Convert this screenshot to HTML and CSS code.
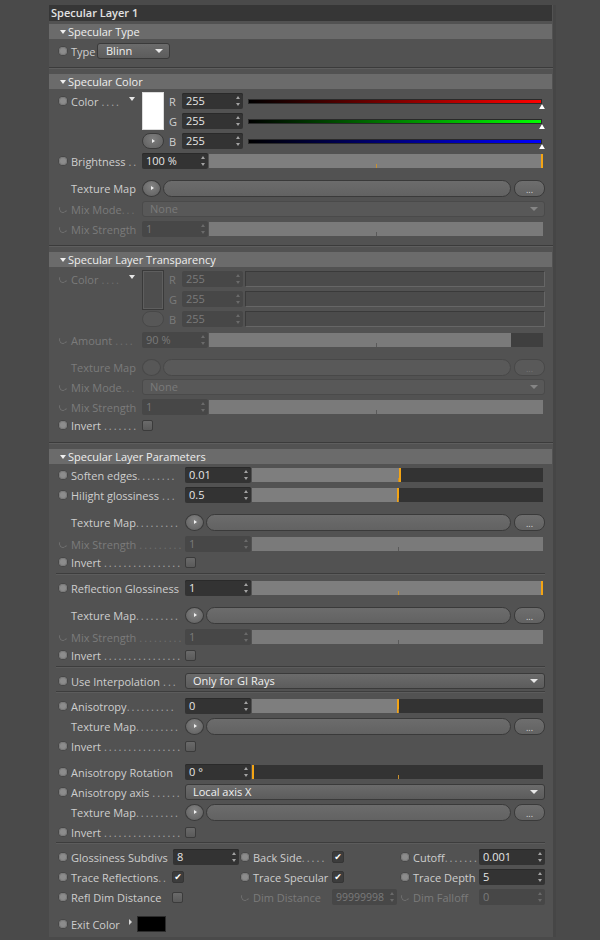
FILE: index.html
```html
<!DOCTYPE html>
<html>
<head>
<meta charset="utf-8">
<link rel="stylesheet" href="styles.css">
</head>
<body>
<div class="panel">
  <div class="title">Specular Layer 1</div>

  <section class="grp">
    <div class="ghead first">Specular Type</div>
    <div class="gbody">
      <div class="row"><i class="rd"></i><span class="lbl w-type">Type</span><div class="dd blinn">Blinn</div></div>
    </div>
  </section>
  <div class="sep"></div>

  <section class="grp">
    <div class="ghead">Specular Color</div>
    <div class="gbody">
      <div class="cblock">
        <div class="chead"><i class="rd"></i><span class="lbl w-color"><span class="t">Color</span><span class="d sp">....</span></span><i class="ctri"></i></div>
        <div class="swcol"><div class="swatch white"></div><div class="sbtn"></div></div>
        <div class="rgb">
          <div class="crow"><span class="ch">R</span><div class="num c">255</div><div class="cbar red"></div></div>
          <div class="crow"><span class="ch">G</span><div class="num c">255</div><div class="cbar green"></div></div>
          <div class="crow"><span class="ch">B</span><div class="num c">255</div><div class="cbar blue"></div></div>
        </div>
      </div>
      <div class="row"><i class="rd"></i><span class="lbl"><span class="t">Brightness</span><span class="d sp">..</span></span><div class="num">100 %</div><div class="sl hot" style="--v:100%"><i class="mk end"></i></div></div>
      <div class="row tx"><i class="rd no"></i><span class="lbl">Texture Map</span><div class="cbtn"></div><div class="pill"></div><div class="more">...</div></div>
      <div class="row m1 dis"><i class="rd off"></i><span class="lbl"><span class="t">Mix Mode</span><span class="d">...</span></span><div class="dd">None</div></div>
      <div class="row dis"><i class="rd off"></i><span class="lbl">Mix Strength</span><div class="num">1</div><div class="sl" style="--v:100%"></div></div>
    </div>
  </section>
  <div class="sep"></div>

  <section class="grp">
    <div class="ghead">Specular Layer Transparency</div>
    <div class="gbody pb9">
      <div class="cblock dis">
        <div class="chead"><i class="rd off"></i><span class="lbl w-color"><span class="t">Color</span><span class="d sp">....</span></span><i class="ctri"></i></div>
        <div class="swcol"><div class="swatch dark"></div><div class="sbtn"></div></div>
        <div class="rgb">
          <div class="crow"><span class="ch">R</span><div class="num c">255</div><div class="tbar"></div></div>
          <div class="crow"><span class="ch">G</span><div class="num c">255</div><div class="tbar"></div></div>
          <div class="crow"><span class="ch">B</span><div class="num c">255</div><div class="tbar"></div></div>
        </div>
      </div>
      <div class="row m1 dis"><i class="rd off"></i><span class="lbl"><span class="t">Amount</span><span class="d sp">....</span></span><div class="num">90 %</div><div class="sl" style="--v:90.4%"></div></div>
      <div class="row tx dis"><i class="rd no"></i><span class="lbl">Texture Map</span><div class="cbtn"></div><div class="pill"></div><div class="more">...</div></div>
      <div class="row dis"><i class="rd off"></i><span class="lbl"><span class="t">Mix Mode</span><span class="d">...</span></span><div class="dd">None</div></div>
      <div class="row dis"><i class="rd off"></i><span class="lbl">Mix Strength</span><div class="num">1</div><div class="sl" style="--v:100%"></div></div>
      <div class="row ck"><i class="rd"></i><span class="lbl"><span class="t">Invert</span><span class="d sp">.......</span></span><i class="cb"></i></div>
    </div>
  </section>
  <div class="sep"></div>

  <section class="grp">
    <div class="ghead">Specular Layer Parameters</div>
    <div class="gbody params">
      <div class="row"><i class="rd"></i><span class="lbl"><span class="t">Soften edges</span><span class="d">........</span></span><div class="num">0.01</div><div class="sl hot" style="--v:50.7%"><i class="mk"></i></div></div>
      <div class="row"><i class="rd"></i><span class="lbl"><span class="t">Hilight glossiness</span><span class="d sp">...</span></span><div class="num">0.5</div><div class="sl hot" style="--v:50.3%"><i class="mk"></i></div></div>
      <div class="row tx"><i class="rd no"></i><span class="lbl"><span class="t">Texture Map</span><span class="d">.........</span></span><div class="cbtn"></div><div class="pill"></div><div class="more">...</div></div>
      <div class="row m2 dis"><i class="rd off"></i><span class="lbl"><span class="t">Mix Strength</span><span class="d sp">.........</span></span><div class="num">1</div><div class="sl" style="--v:100%"></div></div>
      <div class="row ck"><i class="rd"></i><span class="lbl"><span class="t">Invert</span><span class="d sp">................</span></span><i class="cb"></i></div>
      <div class="psep"></div>
      <div class="row"><i class="rd"></i><span class="lbl">Reflection Glossiness</span><div class="num">1</div><div class="sl hot" style="--v:100%"><i class="mk end"></i></div></div>
      <div class="row tx"><i class="rd no"></i><span class="lbl"><span class="t">Texture Map</span><span class="d">.........</span></span><div class="cbtn"></div><div class="pill"></div><div class="more">...</div></div>
      <div class="row m2 dis"><i class="rd off"></i><span class="lbl"><span class="t">Mix Strength</span><span class="d sp">.........</span></span><div class="num">1</div><div class="sl" style="--v:100%"></div></div>
      <div class="row ck"><i class="rd"></i><span class="lbl"><span class="t">Invert</span><span class="d sp">................</span></span><i class="cb"></i></div>
      <div class="psep"></div>
      <div class="row"><i class="rd"></i><span class="lbl"><span class="t">Use Interpolation</span><span class="d sp">...</span></span><div class="dd">Only for GI Rays</div></div>
      <div class="psep s2"></div>
      <div class="row"><i class="rd"></i><span class="lbl"><span class="t">Anisotropy</span><span class="d">..........</span></span><div class="num">0</div><div class="sl hot" style="--v:50.3%"><i class="mk"></i></div></div>
      <div class="row"><i class="rd no"></i><span class="lbl"><span class="t">Texture Map</span><span class="d">.........</span></span><div class="cbtn"></div><div class="pill"></div><div class="more">...</div></div>
      <div class="row ck m2"><i class="rd"></i><span class="lbl"><span class="t">Invert</span><span class="d sp">................</span></span><i class="cb"></i></div>
      <div class="row m8"><i class="rd"></i><span class="lbl">Anisotropy Rotation</span><div class="num">0 °</div><div class="sl hot" style="--v:0%"><i class="mk start"></i></div></div>
      <div class="row"><i class="rd"></i><span class="lbl"><span class="t">Anisotropy axis</span><span class="d sp">......</span></span><div class="dd">Local axis X</div></div>
      <div class="row"><i class="rd no"></i><span class="lbl"><span class="t">Texture Map</span><span class="d">.........</span></span><div class="cbtn"></div><div class="pill"></div><div class="more">...</div></div>
      <div class="row ck m2"><i class="rd"></i><span class="lbl"><span class="t">Invert</span><span class="d sp">................</span></span><i class="cb"></i></div>
      <div class="psep s3"></div>

      <div class="g3">
        <div class="cell c1"><i class="rd"></i><span class="lbl">Glossiness Subdivs</span><div class="num f1">8</div></div>
        <div class="cell c2"><i class="rd"></i><span class="lbl"><span class="t">Back Side</span><span class="d">.....</span></span><i class="cb on">✔</i></div>
        <div class="cell c3"><i class="rd"></i><span class="lbl"><span class="t">Cutoff</span><span class="d">.......</span></span><div class="num">0.001</div></div>

        <div class="cell c1"><i class="rd"></i><span class="lbl"><span class="t">Trace Reflections</span><span class="d">..</span></span><i class="cb on">✔</i></div>
        <div class="cell c2"><i class="rd"></i><span class="lbl">Trace Specular</span><i class="cb on">✔</i></div>
        <div class="cell c3"><i class="rd"></i><span class="lbl">Trace Depth</span><div class="num">5</div></div>

        <div class="cell c1"><i class="rd"></i><span class="lbl">Refl Dim Distance</span><i class="cb"></i></div>
        <div class="cell c2 dis"><i class="rd off"></i><span class="lbl">Dim Distance</span><div class="num f2">99999998</div></div>
        <div class="cell c3 dis"><i class="rd off"></i><span class="lbl">Dim Falloff</span><div class="num">0</div></div>
      </div>

      <div class="row exit"><i class="rd"></i><span class="lbl">Exit Color</span><i class="rtri"></i><div class="exsw"></div></div>
    </div>
  </section>
</div>
</body>
</html>
```

FILE: styles.css
```css
* { box-sizing: border-box; }

body {
  margin: 0;
  background: #4a4a4a;
  font-family: "Open Sans", "Noto Sans", sans-serif;
  font-size: 11px;
  color: #cecece;
}

i { font-style: normal; }

.panel {
  margin: 5px 0 0 49px;
  width: 507px;
  background: #525252;
  border-right: 3px solid #464646;
  padding-bottom: 3px;
}

.title {
  height: 16px;
  line-height: 16px;
  background: #363636;
  color: #e2e2e2;
  font-weight: 600;
  padding-left: 2px;
  margin-right: 1px;
}

.ghead {
  height: 15px;
  line-height: 15px;
  background: #6b6b6b;
  color: #eeeeee;
  padding-left: 11px;
  margin-right: 1px;
  display: flex;
  align-items: center;
}
.ghead.first { margin-top: 3px; }
.ghead::before {
  content: "";
  border-left: 3.5px solid transparent;
  border-right: 3.5px solid transparent;
  border-top: 4px solid #f0f0f0;
  margin-right: 2px;
}

.gbody { padding: 2px 0 6px; --lw: 71px; }
.gbody.pb9 { padding-bottom: 9px; }
.gbody.params { padding: 1px 0 0; --lw: 114px; }

.sep {
  height: 2px;
  border-top: 1px solid #3b3b3b;
  border-bottom: 1px solid #5e5e5e;
  margin-bottom: 5px;
}

.psep {
  height: 2px;
  margin: 3px 8px 3px 7px;
  border-top: 1px solid #3d3d3d;
  border-bottom: 1px solid #5c5c5c;
}
.psep.s2 { margin-top: 0; }
.psep.s3 { margin-top: 2px; }

/* rows */
.row {
  display: flex;
  align-items: center;
  height: 20px;
  padding: 0 8px 0 10px;
}
.row.tx { margin-top: 7px; }
.row.m1 { margin-top: 1px; }
.row.m2 { margin-top: 2px; }
.row.m8 { margin-top: 8px; }
.row.ck { height: 16px; }
.row.exit { margin-top: 7px; }

/* radio */
.rd {
  flex: none;
  width: 8px;
  height: 8px;
  border-radius: 50%;
  background: #8c8c8c;
  box-shadow: inset 0 0 0 1px #7a7a7a, 0 0 0 1px #474747;
  margin-right: 4px;
}
.rd.off {
  background: none;
  box-shadow: none;
  border: 1.5px solid transparent;
  border-left-color: #6e6e6e;
  border-bottom-color: #6e6e6e;
  transform: rotate(-20deg);
}
.rd.no { visibility: hidden; }

/* labels */
.lbl {
  flex: none;
  width: var(--lw);
  display: flex;
  white-space: nowrap;
}
.lbl .t { flex: none; }
.lbl .d {
  flex: none;
  letter-spacing: 2px;
  color: #a6a6a6;
}
.lbl .d.sp { padding-left: 3px; }
.lbl.w-type { width: 26px; }
.lbl.w-color { width: 58px; }

.dis .lbl { color: #7b7b7b; }
.dis .lbl .d { color: #6e6e6e; }

/* number field */
.num {
  flex: none;
  position: relative;
  width: 66px;
  height: 16px;
  line-height: 16px;
  padding-left: 4px;
  background: #333333;
  border-radius: 2px;
  color: #e6e6e6;
  box-shadow: inset 0 1px 0 #2a2a2a;
  overflow: hidden;
  white-space: nowrap;
}
.num::before,
.num::after {
  content: "";
  position: absolute;
  right: 3px;
  border-left: 2.5px solid transparent;
  border-right: 2.5px solid transparent;
}
.num::before { top: 3px; border-bottom: 3px solid #a3a3a3; }
.num::after { bottom: 3px; border-top: 3px solid #a3a3a3; }
.num.c { width: 61px; }
.num.f1 { margin-left: 1px; }
.num.f2 { width: 65px; font-size: 10.5px; }

.dis .num { background: #474747; color: #7a7a7a; box-shadow: none; }
.dis .num::before { border-bottom-color: #6a6a6a; }
.dis .num::after { border-top-color: #6a6a6a; }

/* slider */
.sl {
  flex: 1;
  position: relative;
  height: 14px;
  margin: 0 2px 0 1px;
  background: linear-gradient(to right, #7e7e7e var(--v), #333333 var(--v));
}
.sl::after {
  content: "";
  position: absolute;
  left: 50%;
  bottom: 0;
  width: 1px;
  height: 4px;
  background: #5a5a5a;
}
.sl.hot::after { background: #c8902e; }
.dis .sl { background: linear-gradient(to right, #7a7a7a var(--v), #3f3f3f var(--v)); }
.mk {
  position: absolute;
  top: 0;
  bottom: 0;
  left: var(--v);
  width: 2px;
  margin-left: -1px;
  background: #f3a414;
}
.mk.end { margin-left: -2px; }
.mk.start { margin-left: 0; }

/* dropdown */
.dd {
  flex: 1;
  position: relative;
  height: 16px;
  line-height: 14px;
  border: 1px solid #3a3a3a;
  border-radius: 3px;
  background: linear-gradient(#6b6b6b, #5c5c5c);
  color: #f0f0f0;
  padding-left: 7px;
}
.dd::after {
  content: "";
  position: absolute;
  right: 6px;
  top: 5px;
  border-left: 4px solid transparent;
  border-right: 4px solid transparent;
  border-top: 4px solid #e8e8e8;
}
.dd.blinn { flex: none; width: 73px; padding-left: 8px; }
.dis .dd { background: #585858; border-color: #4a4a4a; color: #7a7a7a; }
.dis .dd::after { border-top-color: #858585; }

/* texture map */
.cbtn {
  flex: none;
  position: relative;
  width: 19px;
  height: 17px;
  border-radius: 50%;
  background: radial-gradient(circle at 50% 35%, #828282, #5e5e5e);
  border: 1px solid #3a3a3a;
}
.cbtn::after,
.sbtn::after {
  content: "";
  position: absolute;
  top: 50%;
  left: 50%;
  margin: -2.5px 0 0 -1px;
  border-top: 2.5px solid transparent;
  border-bottom: 2.5px solid transparent;
  border-left: 3px solid #f0f0f0;
}
.pill {
  flex: 1;
  height: 17px;
  margin-left: 2px;
  border-radius: 9px;
  background: linear-gradient(#6c6c6c, #626262);
  border: 1px solid #3a3a3a;
}
.more {
  flex: none;
  width: 31px;
  height: 17px;
  margin-left: 3px;
  border-radius: 8px;
  background: linear-gradient(#6e6e6e, #626262);
  border: 1px solid #3a3a3a;
  color: #dddddd;
  font-size: 9px;
  text-align: center;
  line-height: 17px;
}
.dis .cbtn { background: #575757; border-color: #484848; }
.dis .cbtn::after { display: none; }
.dis .pill, .dis .more { background: #595959; border-color: #484848; color: #777777; }

/* checkbox */
.cb {
  flex: none;
  width: 11px;
  height: 11px;
  border-radius: 2px;
  background: linear-gradient(#6a6a6a, #5a5a5a);
  border: 1px solid #3b3b3b;
}
.cb.on {
  width: 12px;
  height: 12px;
  background: #3c3c3c;
  border-color: #353535;
  color: #ffffff;
  font-size: 9px;
  line-height: 10px;
  text-align: center;
  overflow: hidden;
  font-family: "DejaVu Sans", sans-serif;
}

/* colour block */
.cblock {
  display: flex;
  padding: 0 8px 0 10px;
}
.chead {
  flex: none;
  display: flex;
  align-items: center;
  align-self: flex-start;
  height: 20px;
}
.ctri {
  flex: none;
  align-self: flex-start;
  margin: 6px 7px 0 0;
  border-left: 3px solid transparent;
  border-right: 3px solid transparent;
  border-top: 4px solid #e6e6e6;
}
.swcol {
  flex: none;
  width: 22px;
  margin-right: 5px;
  padding-top: 1px;
}
.swatch {
  height: 38px;
  border: 1px solid #3c3c3c;
}
.swatch.white { background: #ffffff; border-color: #dcdcdc; }
.swatch.dark { height: 40px; background: #4e4e4e; border-color: #3a3a3a; box-shadow: inset 0 0 0 1px #5e5e5e; }
.sbtn {
  position: relative;
  height: 16px;
  margin-top: 3px;
  border-radius: 8px;
  background: radial-gradient(circle at 50% 35%, #7e7e7e, #5e5e5e);
  border: 1px solid #3a3a3a;
}
.dis .sbtn { margin-top: 1px; background: #575757; border-color: #484848; }
.dis .sbtn::after { display: none; }

.rgb { flex: 1; }
.crow {
  display: flex;
  align-items: center;
  height: 20px;
}
.ch { flex: none; width: 13px; color: #cfcfcf; }
.dis .ch { color: #7a7a7a; }

.cbar {
  flex: 1;
  position: relative;
  height: 5px;
  margin: 0 3px 0 5px;
  border: 1px solid #2a2a2a;
}
.cbar::after {
  content: "";
  position: absolute;
  right: -4px;
  top: 4px;
  border-left: 3.5px solid transparent;
  border-right: 3.5px solid transparent;
  border-bottom: 5px solid #ffffff;
  filter: drop-shadow(0 0 0.6px #000);
}
.cbar.red { background: linear-gradient(to right, #000000, #ff0000); }
.cbar.green { background: linear-gradient(to right, #000000, #00ff00); }
.cbar.blue { background: linear-gradient(to right, #000000, #0000ff); }

.tbar {
  flex: 1;
  height: 16px;
  margin-left: 2px;
  background: #4b4b4b;
  border: 1px solid;
  border-color: #3a3a3a #666666 #666666 #3a3a3a;
}

/* bottom grid */
.g3 {
  display: grid;
  grid-template-columns: 182px 160px 144px;
  padding: 0 8px 0 10px;
}
.cell {
  display: flex;
  align-items: center;
  height: 20px;
}
.c1 { --lw: 101px; }
.c2 { --lw: 79px; }
.c3 { --lw: 66px; }

/* exit colour */
.row.exit .lbl { width: 58px; }
.rtri {
  flex: none;
  margin-right: 5px;
  align-self: flex-start;
  margin-top: 5px;
  border-top: 3px solid transparent;
  border-bottom: 3px solid transparent;
  border-left: 3px solid #d8d8d8;
}
.exsw {
  flex: none;
  width: 29px;
  height: 16px;
  background: #000000;
  border: 1px solid #2c2c2c;
}
```
